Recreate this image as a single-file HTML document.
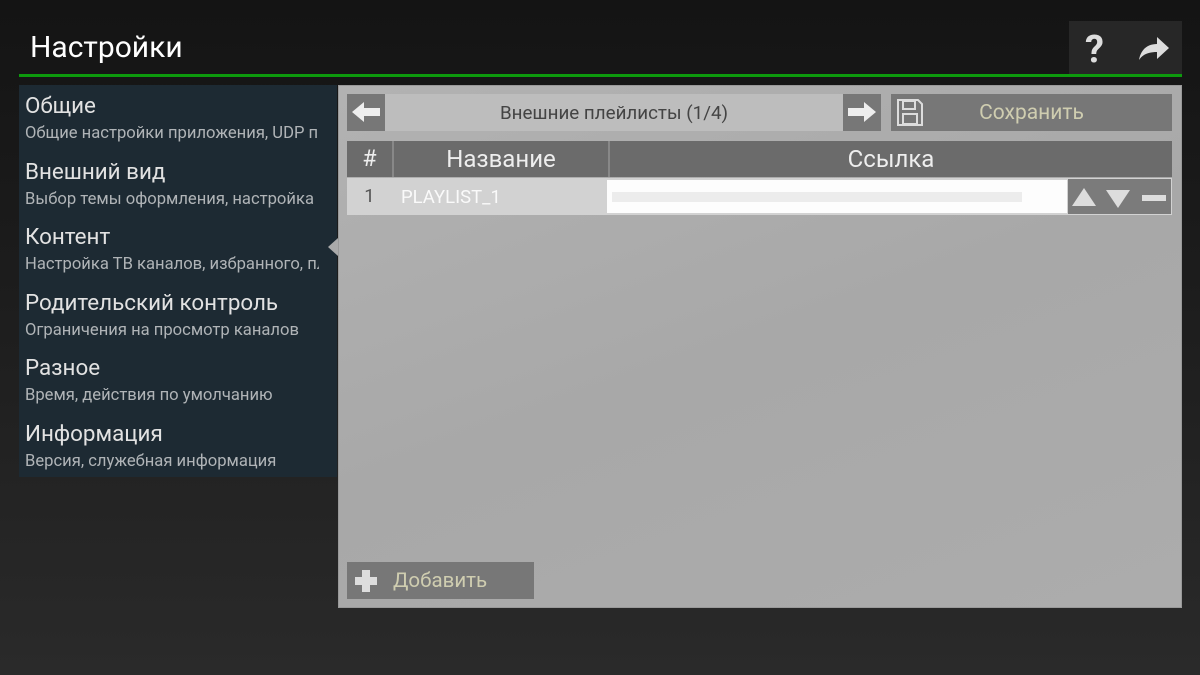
<!DOCTYPE html>
<html><head><meta charset="utf-8"><style>
*{margin:0;padding:0;box-sizing:border-box}
body{width:1200px;height:675px;overflow:hidden;font-family:"Roboto","Liberation Sans",sans-serif;background:linear-gradient(#141414,#1c1c1c 40%,#2a2a2a);position:relative}
.a{position:absolute}
.title{left:30px;top:30px;font-size:30px;color:#fff}
.green{left:19px;top:74px;width:1163px;height:3px;background:#0d9a0d}
.tb{left:1069px;top:21px;width:113px;height:53px;background:#272727}
.left{left:19px;top:85px;width:318px;height:392px;background:#1d2a33}
.it{position:absolute;left:6px;white-space:nowrap;overflow:hidden;width:294px}
.h{font-size:22.4px;color:#e2e2e2}
.s{font-size:16.6px;color:#b0b4b7}
.right{left:338px;top:85px;width:844px;height:523px;background:linear-gradient(160deg,#b2b2b2,#a8a8a8 50%,#acacac);border:1px solid #999}
.btn{background:#777}
</style></head><body>
<div class="a title">Настройки</div>
<div class="a green"></div>
<div class="a tb">
<div class="a" style="left:16px;top:7px;font-size:38px;font-weight:bold;color:#ddd">?</div>
<svg class="a" style="left:68px;top:14px" width="34" height="26" viewBox="0 0 34 26"><path d="M2 25 C4 13 12 9 20 9 V2 L32 13 L20 24 V17 C12 17 6 19 2 25Z" fill="#ddd"/></svg>
</div>
<div class="a left">
<div class="it h" style="top:8px">Общие</div>
<div class="it s" style="top:39px">Общие настройки приложения, UDP прокси</div>
<div class="it h" style="top:74px">Внешний вид</div>
<div class="it s" style="top:105px">Выбор темы оформления, настройка шрифтов</div>
<div class="it h" style="top:139px">Контент</div>
<div class="it s" style="top:170px">Настройка ТВ каналов, избранного, плейлистов</div>
<div class="it h" style="top:205px">Родительский контроль</div>
<div class="it s" style="top:236px">Ограничения на просмотр каналов</div>
<div class="it h" style="top:270px">Разное</div>
<div class="it s" style="top:301px">Время, действия по умолчанию</div>
<div class="it h" style="top:336px">Информация</div>
<div class="it s" style="top:367px">Версия, служебная информация</div>
</div>
<div class="a" style="left:328px;top:238px;width:0;height:0;border-top:9px solid transparent;border-bottom:9px solid transparent;border-right:10px solid #aaa"></div>
<div class="a right"></div>
<div class="a btn" style="left:347px;top:94px;width:38px;height:37px"></div>
<svg class="a" style="left:350px;top:100px" width="32" height="24"><path d="M2 12 L14 2 V8 H30 V16 H14 V22Z" fill="#eee"/></svg>
<div class="a" style="left:385px;top:94px;width:458px;height:37px;background:#bdbdbd;text-align:center;line-height:38px;font-size:18.8px;color:#444">Внешние плейлисты (1/4)</div>
<div class="a btn" style="left:843px;top:94px;width:38px;height:37px"></div>
<svg class="a" style="left:846px;top:100px" width="32" height="24"><path d="M30 12 L18 2 V8 H2 V16 H18 V22Z" fill="#eee"/></svg>
<div class="a btn" style="left:891px;top:94px;width:281px;height:37px;text-align:center;line-height:38px;font-size:21px;color:#cfcdb0">Сохранить</div>
<svg class="a" style="left:896px;top:98px" width="28" height="29"><path d="M2 2 H22 L26 6 V27 H2Z" fill="none" stroke="#ddd" stroke-width="2"/><rect x="7" y="3" width="12" height="8" fill="none" stroke="#ddd" stroke-width="2"/><rect x="7" y="16" width="14" height="10" fill="none" stroke="#ddd" stroke-width="2"/></svg>
<div class="a" style="left:347px;top:141px;width:825px;height:36px;background:#6b6b6b"></div>
<div class="a" style="left:347px;top:141px;width:45px;height:36px;text-align:center;line-height:36px;font-size:23px;color:#eee">#</div>
<div class="a" style="left:392px;top:141px;width:2px;height:36px;background:#888"></div>
<div class="a" style="left:394px;top:141px;width:214px;height:36px;text-align:center;line-height:36px;font-size:24px;color:#eee">Название</div>
<div class="a" style="left:608px;top:141px;width:2px;height:36px;background:#888"></div>
<div class="a" style="left:610px;top:141px;width:562px;height:36px;text-align:center;line-height:36px;font-size:24px;color:#eee">Ссылка</div>
<div class="a" style="left:347px;top:178px;width:825px;height:37px;background:#d2d2d2"></div>
<div class="a" style="left:347px;top:178px;width:45px;height:37px;text-align:center;line-height:37px;font-size:18.5px;color:#555">1</div>
<div class="a" style="left:401px;top:179px;line-height:37px;font-size:18.5px;color:#fafafa">PLAYLIST_1</div>
<div class="a" style="left:607px;top:180px;width:460px;height:33px;background:#fdfdfd"></div>
<div class="a" style="left:612px;top:192px;width:410px;height:10px;background:#ececec"></div>
<div class="a" style="left:1068px;top:179px;width:103px;height:35px;background:#7b7b7b"></div>
<svg class="a" style="left:1070px;top:184px" width="100" height="26"><path d="M2 22 L14 4 L26 22Z M36 6 H60 L48 24Z" fill="#ddd"/><rect x="72" y="11" width="24" height="6" fill="#ddd"/></svg>
<div class="a btn" style="left:347px;top:562px;width:187px;height:37px;font-size:20.5px;color:#cfcdb0;line-height:38px;padding-left:46px">Добавить</div>
<svg class="a" style="left:353px;top:568px" width="26" height="26"><path d="M9 2 H17 V9 H24 V17 H17 V24 H9 V17 H2 V9 H9Z" fill="#ddd"/></svg>
</body></html>
